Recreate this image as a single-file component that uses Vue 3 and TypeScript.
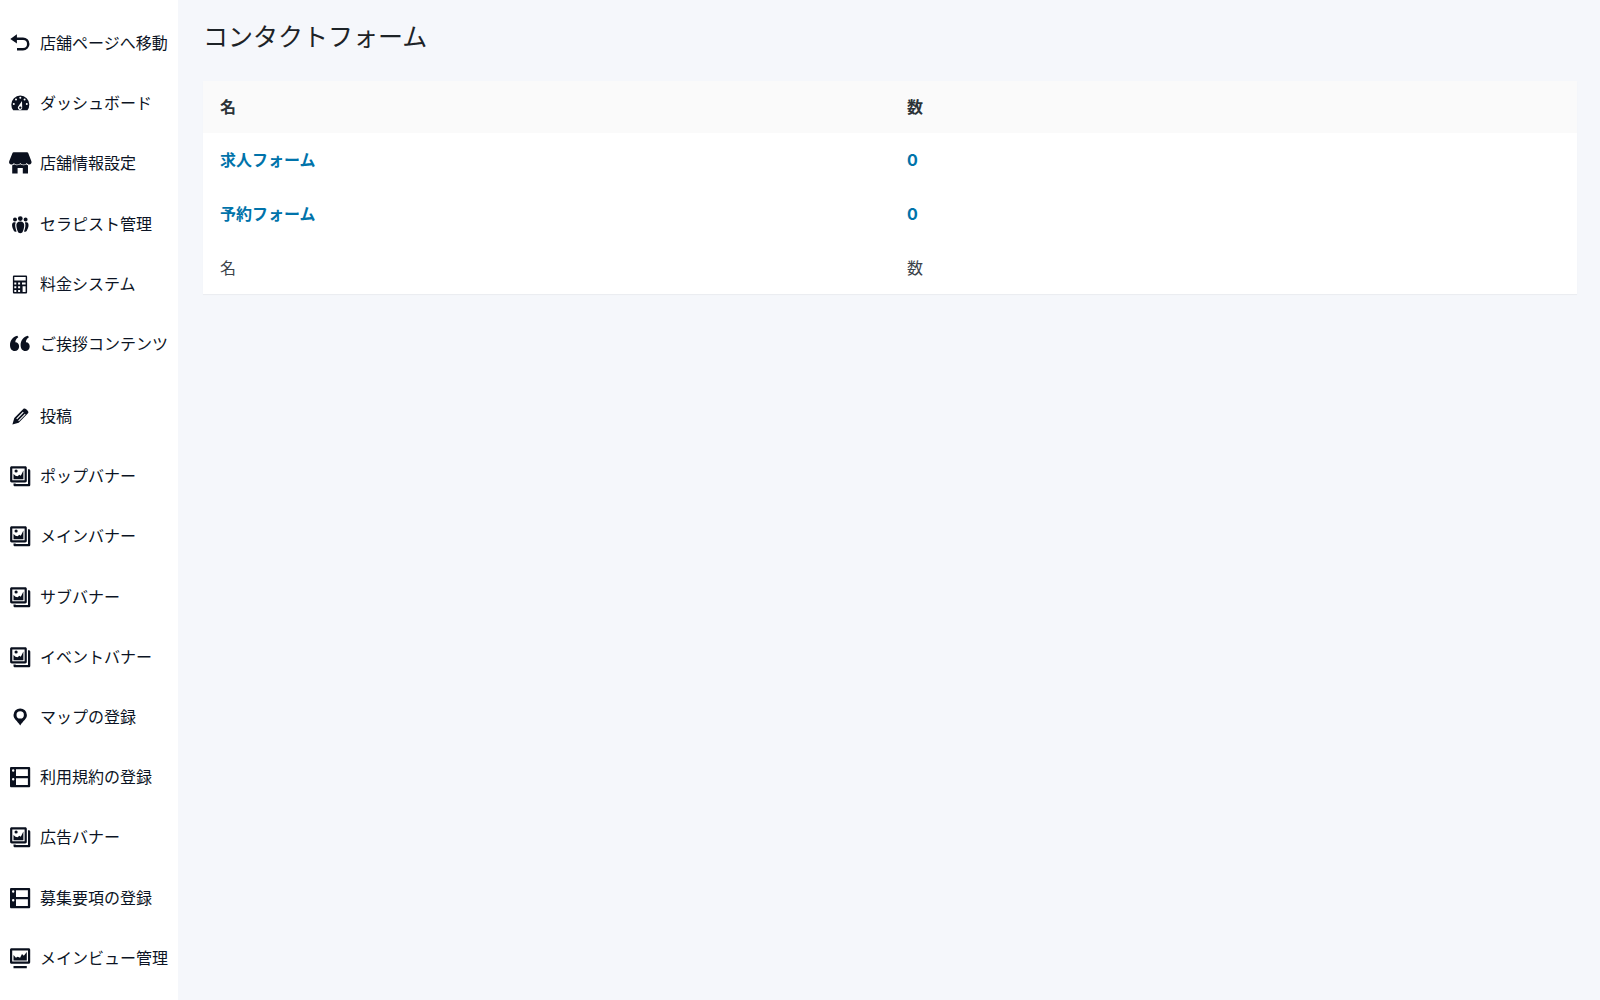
<script setup lang="ts">
type IconName =
  | 'undo' | 'gauge' | 'store' | 'groups' | 'calculator' | 'quote'
  | 'pencil' | 'images' | 'pin' | 'film' | 'monitor'

interface MenuItem {
  label: string
  icon: IconName
}

interface FormRow {
  name: string
  count: number
}

const icons: Record<IconName, string> = {
  undo: 'M2.300 8L8.900 3.200v3.200H15a6.500 6.500 0 0 1 0 13H9v-2.500h6a4 4 0 0 0 0-8H8.900v3.600z',
  gauge:
    'M5.200 19.200A9 9 0 0 1 3.300 13.500a9 9 0 0 1 18 0 9 9 0 0 1-1.900 5.700zM12.300 5.800a1 1 0 1 0 0 2 1 1 0 0 0 0-2zM8 7.500a1 1 0 1 0 0 2 1 1 0 0 0 0-2zM16.600 7.500a1 1 0 1 0 0 2 1 1 0 0 0 0-2zM5.800 12a1 1 0 1 0 0 2 1 1 0 0 0 0-2zM18.800 12a1 1 0 1 0 0 2 1 1 0 0 0 0-2zM14 10l-3.400 5a2.200 2.200 0 1 0 3.600 1.400zM12.300 15.400a1.200 1.200 0 1 1 0 2.400 1.200 1.200 0 0 1 0-2.400z',
  store:
    'M5.700 1.200h13.300c.7 0 1 .4 1.300 1l3.100 8c.6 1.800-.5 3.300-2.100 3.300-1.400 0-2.100-.8-2.700-1.600-.7.900-1.500 1.600-3 1.600s-2.300-.6-3.300-1.600c-.9 1-1.700 1.600-3.200 1.600s-2.400-.7-3.100-1.600c-.6.800-1.200 1.600-2.600 1.600-1.700 0-2.800-1.500-2.200-3.300l3.200-8c.2-.6.600-1 1.300-1zM4.200 14.200c.9 0 1.400-.4 1.900-.9.700.6 1.500.9 2.700.9s2.400-.4 3.500-1c1 .6 2.200 1 3.300 1s2-.3 2.700-.9c.5.500 1 .9 1.700.9v8.200h-5.200V17h-5.200v5.400H4.200z',
  groups:
    'M12.300 4.200a2.400 2.400 0 1 1 0 4.800 2.400 2.400 0 0 1 0-4.800zM7 5.600a2 2 0 1 1 0 4 2 2 0 0 1 0-4zM17.600 5.600a2 2 0 1 1 0 4 2 2 0 0 1 0-4zM12.300 9.600c2.700 0 4.200 1.800 3.900 4.400-.2 2.200-.8 3.800-1.300 5.300-.5 1.400-1.400 1.900-2.600 1.900s-2.100-.5-2.600-1.900c-.5-1.500-1.100-3.100-1.300-5.300-.3-2.600 1.200-4.400 3.900-4.400zM6.200 10.200c.6 0 1.100.1 1.500.4-1.200 2.700-.2 5.900.9 8.900-1.200.6-2.300.3-2.800-.8-.7-1.600-1.500-2.900-1.700-4.700-.2-2.200.4-3.800 2.100-3.800zM18.400 10.200c-.6 0-1.100.1-1.500.4 1.200 2.700.2 5.900-.9 8.900 1.200.6 2.300.3 2.800-.8.700-1.600 1.500-2.900 1.700-4.700.2-2.200-.4-3.800-2.100-3.800z',
  calculator:
    'M6.200 3.500h11.600c.8 0 1.300.5 1.300 1.300v15.400c0 .8-.5 1.300-1.300 1.300H6.200c-.8 0-1.300-.5-1.300-1.300V4.800c0-.8.500-1.300 1.300-1.300zM6.300 5v3.600h11.400V5zM6.300 10.500v2h2v-2zM10.100 10.500v2h2v-2zM14 10.500v2h3.600v-2zM6.300 14.200v2h2v-2zM10.100 14.200v2h2v-2zM6.300 17.900v2h2v-2zM10.100 17.900v2h2v-2zM14.600 14.200v5.700h3v-5.700z',
  quote:
    'M9.300 3.800l1 1.500C8.300 6.500 7.300 8.200 7.300 10.200c2.200-.1 3.800 1.700 3.800 4.200 0 2.700-1.800 4.700-4.300 4.700-3 0-4.800-2.300-4.800-6 0-4.500 2.600-8 7.300-9.300zM19.900 3.800l1 1.500c-2 1.200-3 2.900-3 4.900 2.200-.1 3.800 1.700 3.800 4.200 0 2.700-1.800 4.700-4.300 4.700-3 0-4.800-2.300-4.800-6 0-4.500 2.600-8 7.300-9.300z',
  pencil:
    'M15.500 4.800c.6-.6 1.600-.5 2.500.3l1.700 1.700c.8.900.9 1.900.3 2.500l-9.300 9.500-6.300 1.700 1.900-6.500zM14.900 7.800l-6.600 6.700.8.800 6.600-6.700zM16.900 9.700l-6.700 6.800.7.700 6.700-6.800z',
  images:
    'M3.700 2.200h13.500c1 0 1.600.6 1.600 1.600v13c0 1-.6 1.600-1.600 1.600H3.700c-1 0-1.600-.6-1.600-1.600v-13c0-1 .6-1.600 1.600-1.600zM4.300 4.400v11.800h12.300V4.400zM5.500 15.200V10l2 1.700 2.100.5 1.700-1.400 1.500 1 2.600-5.300v8.700zM8.100 5.400a1.600 1.600 0 1 1 0 3.200 1.600 1.600 0 0 1 0-3.200zM20 5.200h.7c1 0 1.600.6 1.600 1.600v13.900c0 1-.6 1.600-1.600 1.600H7.100c-1 0-1.600-.6-1.600-1.600v-1.100h2.200V20H20z',
  pin: 'M12.200 3.400a6.600 6.600 0 0 1 6.700 6.500c0 4-3.700 5.700-6.700 10.500-3-4.800-6.700-6.500-6.700-10.500a6.600 6.600 0 0 1 6.700-6.500zM12.200 6.200a3.700 3.700 0 1 0 0 7.400 3.700 3.700 0 0 0 0-7.400z',
  film: 'M3.400 2h17.400c.9 0 1.400.5 1.400 1.400v17.500c0 .9-.5 1.400-1.400 1.400H3.400c-.9 0-1.400-.5-1.400-1.400V3.400C2 2.500 2.500 2 3.400 2zM8 4.300V11h11.900V4.300zM8 13.300V20h11.900v-6.700zM5.200 4.300a1.200 1.200 0 1 0 0 2.400 1.200 1.200 0 0 0 0-2.400zM5.200 13a1.200 1.200 0 1 0 0 2.400 1.200 1.200 0 0 0 0-2.400z',
  monitor:
    'M3.600 2.300h17c1 0 1.600.6 1.600 1.500v12.400c0 .9-.6 1.500-1.600 1.500h-17c-1 0-1.600-.6-1.600-1.500V3.800c0-.9.600-1.500 1.600-1.500zM4.200 4.500v11h15.800v-11zM5.500 14.400V8.900l2.400 2.800 1.800-1 2.400 1.100 1.900-3.700 1.800 1.600 3-3.600v8.300zM5.500 20h13.300v2.200H5.500z',
}

const shopMenu: MenuItem[] = [
  { label: '店舗ページへ移動', icon: 'undo' },
  { label: 'ダッシュボード', icon: 'gauge' },
  { label: '店舗情報設定', icon: 'store' },
  { label: 'セラピスト管理', icon: 'groups' },
  { label: '料金システム', icon: 'calculator' },
  { label: 'ご挨拶コンテンツ', icon: 'quote' },
]

const contentMenu: MenuItem[] = [
  { label: '投稿', icon: 'pencil' },
  { label: 'ポップバナー', icon: 'images' },
  { label: 'メインバナー', icon: 'images' },
  { label: 'サブバナー', icon: 'images' },
  { label: 'イベントバナー', icon: 'images' },
  { label: 'マップの登録', icon: 'pin' },
  { label: '利用規約の登録', icon: 'film' },
  { label: '広告バナー', icon: 'images' },
  { label: '募集要項の登録', icon: 'film' },
  { label: 'メインビュー管理', icon: 'monitor' },
]

const menuGroups = [shopMenu, contentMenu]

const forms: FormRow[] = [
  { name: '求人フォーム', count: 0 },
  { name: '予約フォーム', count: 0 },
]
</script>

<template>
  <div class="admin">
    <nav class="sidebar">
      <ul v-for="(group, index) in menuGroups" :key="index" class="menu">
        <li v-for="item in group" :key="item.label">
          <a class="menu-link" href="#">
            <svg class="menu-icon" viewBox="0 0 24 24" aria-hidden="true">
              <path :d="icons[item.icon]" fill-rule="evenodd" />
            </svg>
            <span>{{ item.label }}</span>
          </a>
        </li>
      </ul>
    </nav>

    <main class="content">
      <h1 class="title">コンタクトフォーム</h1>
      <table class="forms">
        <thead>
          <tr>
            <th scope="col">名</th>
            <th scope="col">数</th>
          </tr>
        </thead>
        <tbody>
          <tr v-for="form in forms" :key="form.name">
            <td><a class="form-link" href="#">{{ form.name }}</a></td>
            <td><a class="form-link" href="#">{{ form.count }}</a></td>
          </tr>
        </tbody>
        <tfoot>
          <tr>
            <td>名</td>
            <td>数</td>
          </tr>
        </tfoot>
      </table>
    </main>
  </div>
</template>

<style>
body {
  margin: 0;
  background: #f5f7fb;
}
</style>

<style scoped>
.admin {
  display: flex;
  min-height: 100vh;
  font-family: Inter, "Noto Sans CJK JP", sans-serif;
  font-size: 16px;
  line-height: 20px;
  color: #0c1424;
}

.sidebar {
  box-sizing: border-box;
  flex: 0 0 178px;
  display: flex;
  flex-direction: column;
  gap: 12px;
  padding: 13px 0;
  background: #fff;
}

.menu {
  display: grid;
  grid-auto-rows: 1fr;
  margin: 0;
  padding: 0;
  list-style: none;
}

.menu:first-child {
  min-height: 361px;
}

.menu:last-child {
  min-height: 602px;
}

.menu-link {
  display: flex;
  align-items: center;
  gap: 8px;
  height: 60px;
  padding-left: 8px;
  color: inherit;
  text-decoration: none;
  white-space: nowrap;
}

.menu-icon {
  flex: none;
  width: 24px;
  height: 24px;
  fill: #0a101e;
}

.content {
  flex: 1;
  min-width: 0;
  padding: 18px 23px 24px 25px;
}

.title {
  margin: 0 0 24px;
  font-size: 25px;
  font-weight: 400;
  line-height: 39px;
  color: #1d2327;
}

.forms {
  width: 100%;
  table-layout: fixed;
  border-collapse: collapse;
  background: #fff;
  box-shadow: 0 1px 1px rgba(0, 0, 0, 0.04);
  color: #3c434a;
}

.forms th,
.forms td {
  height: 54px;
  padding: 0 17px;
  text-align: left;
  vertical-align: middle;
}

.forms th {
  height: 52px;
  background: #fafafa;
  color: #2c3338;
  font-weight: 700;
}

.forms tfoot td {
  height: 53px;
}

.form-link {
  color: #0073aa;
  font-weight: 700;
  text-decoration: none;
}
</style>
